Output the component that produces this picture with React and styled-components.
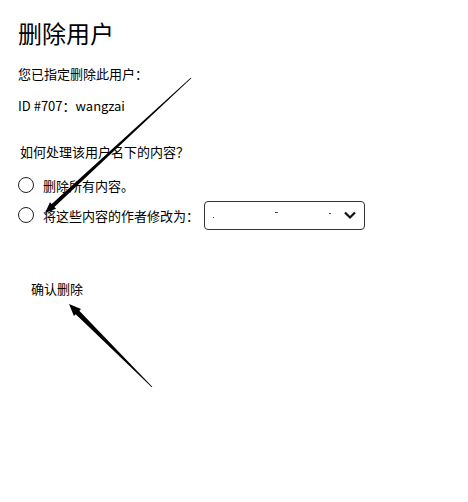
import React from "react";
import styled, { createGlobalStyle } from "styled-components";

const Global = createGlobalStyle`
  html, body { margin: 0; padding: 0; background: #fff; }
  body { font-family: "Noto Sans CJK SC", "Noto Sans", sans-serif; color: #000; }
`;

const Page = styled.div`
  position: relative;
  width: 468px;
  height: 502px;
  overflow: hidden;
  box-sizing: border-box;
  padding: 18px 0 0 18px;
  display: flex;
  flex-direction: column;
`;

const Title = styled.h1`
  margin: 0;
  font-size: 24px;
  font-weight: 400;
  line-height: 30px;
  color: #000;
`;

const Text = styled.p`
  margin: ${(p) => p.$top}px 0 0 ${(p) => p.$left || 0}px;
  font-size: 13px;
  line-height: 20px;
`;

const RadioRow = styled.label`
  display: flex;
  align-items: center;
  gap: 9px;
  margin-top: ${(p) => p.$top}px;
  height: ${(p) => p.$h}px;
  font-size: 13px;
`;

const Circle = styled.span`
  width: 14px;
  height: 14px;
  border: 1.2px solid #222;
  border-radius: 50%;
  flex: none;
`;

const Select = styled.div`
  margin-left: -4px;
  width: 161px;
  height: 29px;
  box-sizing: border-box;
  border: 1px solid #333;
  border-radius: 4px;
  display: flex;
  align-items: center;
  padding: 0 7px 0 8px;
`;

const Mark = styled.span`
  display: block;
  width: ${(p) => p.$w}px;
  height: 1px;
  background: #444;
  margin-left: ${(p) => p.$x}px;
  transform: translateY(${(p) => p.$y}px);
`;

const Chevron = styled.svg`
  margin-left: auto;
  width: 14px;
  height: 10px;
`;

const ConfirmButton = styled.button`
  align-self: flex-start;
  margin: 47px 0 0 13px;
  padding: 0;
  border: none;
  background: none;
  font-family: inherit;
  font-size: 13px;
  line-height: 24px;
  color: #000;
`;

const Overlay = styled.svg`
  position: absolute;
  inset: 0;
  pointer-events: none;
`;

function arrowPoints(tail, tip, w0, w1, headLen, headW) {
  const dx = tip[0] - tail[0];
  const dy = tip[1] - tail[1];
  const len = Math.hypot(dx, dy);
  const ux = dx / len, uy = dy / len;
  const nx = -uy, ny = ux;
  const bx = tip[0] - ux * headLen, by = tip[1] - uy * headLen;
  const pts = [
    [tail[0] + nx * w0 / 2, tail[1] + ny * w0 / 2],
    [bx + nx * w1 / 2, by + ny * w1 / 2],
    [bx + nx * headW / 2, by + ny * headW / 2],
    tip,
    [bx - nx * headW / 2, by - ny * headW / 2],
    [bx - nx * w1 / 2, by - ny * w1 / 2],
    [tail[0] - nx * w0 / 2, tail[1] - ny * w0 / 2],
  ];
  return pts.map((p) => `${p[0].toFixed(1)},${p[1].toFixed(1)}`).join(" ");
}

export default function App() {
  return (
    <>
      <Global />
      <Page>
        <Title>删除用户</Title>
        <Text $top={16}>您已指定删除此用户：</Text>
        <Text $top={12}>ID #707：wangzai</Text>
        <Text $top={26} $left={2}>如何处理该用户名下的内容？</Text>
        <RadioRow $top={12} $h={22}>
          <Circle />
          <span>删除所有内容。</span>
        </RadioRow>
        <RadioRow $top={4} $h={30}>
          <Circle />
          <span>将这些内容的作者修改为：</span>
          <Select>
            <Mark $w={1} $x={0} $y={2} />
            <Mark $w={3} $x={61} $y={-3} />
            <Mark $w={2} $x={51} $y={-2} />
            <Chevron viewBox="0 0 14 10">
              <path d="M2 2.5 L7 7.5 L12 2.5" fill="none" stroke="#111" strokeWidth="2.2" />
            </Chevron>
          </Select>
        </RadioRow>
        <ConfirmButton>确认删除</ConfirmButton>
        <Overlay width="468" height="502" viewBox="0 0 468 502">
          <polygon points={arrowPoints([191, 78], [45, 213], 0.8, 4, 11, 9)} fill="#000" />
          <polygon points={arrowPoints([152, 387], [69, 304], 0.8, 5, 12, 10)} fill="#000" />
        </Overlay>
      </Page>
    </>
  );
}
